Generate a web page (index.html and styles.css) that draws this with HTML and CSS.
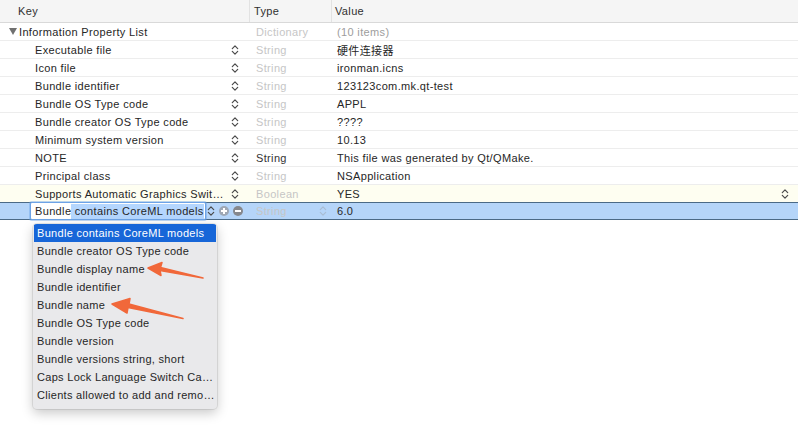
FILE: index.html
```html
<!DOCTYPE html>
<html>
<head>
<meta charset="utf-8">
<link rel="stylesheet" href="styles.css">
</head>
<body>
<svg width="0" height="0" class="defs">
  <defs>
    <g id="chev">
      <path d="M1.3 4.6 L4 1.9 L6.7 4.6" fill="none" stroke="currentColor" stroke-width="1.2" stroke-linecap="round" stroke-linejoin="round"/>
      <path d="M1.3 7.4 L4 10.1 L6.7 7.4" fill="none" stroke="currentColor" stroke-width="1.2" stroke-linecap="round" stroke-linejoin="round"/>
    </g>
  </defs>
</svg>
<div class="plist">
  <div class="header">
    <div class="hcell hkey">Key</div>
    <div class="hcell htype">Type</div>
    <div class="hcell hvalue">Value</div>
  </div>

  <div class="row">
    <div class="kcell root"><span class="disc"></span><span class="kname">Information Property List</span></div>
    <div class="tcell faint">Dictionary</div>
    <div class="vcell muted">(10 items)</div>
  </div>

  <div class="row">
    <div class="kcell"><span class="kname">Executable file</span><svg class="chev" viewBox="0 0 8 12"><use href="#chev"/></svg></div>
    <div class="tcell faint">String</div>
    <div class="vcell">硬件连接器</div>
  </div>

  <div class="row">
    <div class="kcell"><span class="kname">Icon file</span><svg class="chev" viewBox="0 0 8 12"><use href="#chev"/></svg></div>
    <div class="tcell faint">String</div>
    <div class="vcell">ironman.icns</div>
  </div>

  <div class="row">
    <div class="kcell"><span class="kname">Bundle identifier</span><svg class="chev" viewBox="0 0 8 12"><use href="#chev"/></svg></div>
    <div class="tcell faint">String</div>
    <div class="vcell">123123com.mk.qt-test</div>
  </div>

  <div class="row">
    <div class="kcell"><span class="kname">Bundle OS Type code</span><svg class="chev" viewBox="0 0 8 12"><use href="#chev"/></svg></div>
    <div class="tcell faint">String</div>
    <div class="vcell">APPL</div>
  </div>

  <div class="row">
    <div class="kcell"><span class="kname">Bundle creator OS Type code</span><svg class="chev" viewBox="0 0 8 12"><use href="#chev"/></svg></div>
    <div class="tcell faint">String</div>
    <div class="vcell">????</div>
  </div>

  <div class="row">
    <div class="kcell"><span class="kname">Minimum system version</span><svg class="chev" viewBox="0 0 8 12"><use href="#chev"/></svg></div>
    <div class="tcell faint">String</div>
    <div class="vcell">10.13</div>
  </div>

  <div class="row">
    <div class="kcell"><span class="kname">NOTE</span><svg class="chev" viewBox="0 0 8 12"><use href="#chev"/></svg></div>
    <div class="tcell">String</div>
    <div class="vcell">This file was generated by Qt/QMake.</div>
  </div>

  <div class="row">
    <div class="kcell"><span class="kname">Principal class</span><svg class="chev" viewBox="0 0 8 12"><use href="#chev"/></svg></div>
    <div class="tcell faint">String</div>
    <div class="vcell">NSApplication</div>
  </div>

  <div class="row hover">
    <div class="kcell"><span class="kname">Supports Automatic Graphics Switching</span><svg class="chev" viewBox="0 0 8 12"><use href="#chev"/></svg></div>
    <div class="tcell faint">Boolean</div>
    <div class="vcell vpop"><span class="vtext">YES</span><svg class="chev" viewBox="0 0 8 12"><use href="#chev"/></svg></div>
  </div>

  <div class="row selected">
    <div class="kcell editing">
      <div class="field"><span>Bundle</span><span class="sel">&nbsp;contains CoreML models</span></div>
      <svg class="chev" viewBox="0 0 8 12"><use href="#chev"/></svg>
      <span class="btn plus"></span>
      <span class="btn minus"></span>
    </div>
    <div class="tcell faint tpop"><span class="ttext">String</span><svg class="chev light" viewBox="0 0 8 12"><use href="#chev"/></svg></div>
    <div class="vcell">6.0</div>
  </div>
</div>

<div class="popup">
  <div class="item active">Bundle contains CoreML models</div>
  <div class="item">Bundle creator OS Type code</div>
  <div class="item">Bundle display name</div>
  <div class="item">Bundle identifier</div>
  <div class="item">Bundle name</div>
  <div class="item">Bundle OS Type code</div>
  <div class="item">Bundle version</div>
  <div class="item">Bundle versions string, short</div>
  <div class="item">Caps Lock Language Switch Capability</div>
  <div class="item">Clients allowed to add and remove fonts</div>
</div>

<svg class="arrows" width="798" height="438" viewBox="0 0 798 438">
  <path d="M203 278 L160 270.5 L161 275.5 L148 268 L162 262.5 L160.5 267.5 Z" fill="#f1683a" stroke="#f1683a" stroke-width="1.5" stroke-linejoin="round"/>
  <path d="M183 318.5 L128 307.5 L127 313 L112 304 L130 298.5 L129 304 Z" fill="#f1683a" stroke="#f1683a" stroke-width="1.5" stroke-linejoin="round"/>
</svg>
</body>
</html>
```

FILE: styles.css
```css
html, body {
  margin: 0;
  padding: 0;
  background: #ffffff;
}
body {
  width: 798px;
  height: 438px;
  overflow: hidden;
  position: relative;
  font-family: "Liberation Sans", "Noto Sans CJK SC", Arial, sans-serif;
  font-size: 11px;
  letter-spacing: 0.35px;
  color: #262626;
}
.defs {
  position: absolute;
}
.plist {
  display: flex;
  flex-direction: column;
}
.header {
  display: grid;
  grid-template-columns: 249px 82px 1fr;
  height: 22px;
  background: #f5f5f5;
  border-bottom: 1px solid #d9d9d9;
}
.hcell {
  display: flex;
  align-items: center;
  font-size: 11px;
  color: #303030;
}
.hkey {
  padding-left: 18px;
}
.htype {
  padding-left: 4px;
  border-left: 1px solid #e2e2e2;
}
.hvalue {
  padding-left: 3px;
  border-left: 1px solid #e2e2e2;
}
.row {
  display: grid;
  grid-template-columns: 249px 82px 1fr;
  height: 17px;
  border-bottom: 1px solid #ededed;
  background: #ffffff;
}
.row.hover {
  background: #fefef1;
}
.row.selected {
  background: #b5d5f9;
  border-top: 1px solid #4b6a86;
  border-bottom: 1px solid #4b6a86;
  height: 16px;
  margin-top: -1px;
}
.kcell {
  display: flex;
  align-items: center;
  padding-left: 35px;
  padding-right: 10px;
  min-width: 0;
}
.kcell.root {
  padding-left: 9px;
}
.kname {
  flex: 1;
  min-width: 0;
  white-space: nowrap;
  overflow: hidden;
  text-overflow: ellipsis;
  padding-right: 6px;
}
.disc {
  width: 0;
  height: 0;
  border-left: 4px solid transparent;
  border-right: 4px solid transparent;
  border-top: 7px solid #707070;
  margin-right: 2px;
}
.chev {
  width: 8px;
  height: 12px;
  flex: none;
  color: #4a4a4a;
}
.chev.light {
  color: #a9bdd4;
}
.tcell {
  display: flex;
  align-items: center;
  padding-left: 7px;
  color: #333333;
}
.tcell.faint {
  color: #c6c6c6;
}
.tpop {
  padding-right: 4px;
}
.ttext {
  flex: 1;
}
.vcell {
  display: flex;
  align-items: center;
  padding-left: 6px;
  white-space: nowrap;
}
.vcell.muted {
  color: #9d9d9d;
}
.vpop {
  padding-right: 9px;
}
.vtext {
  flex: 1;
}
.kcell.editing {
  padding-left: 31px;
  padding-right: 0;
}
.field {
  width: 170px;
  height: 16px;
  flex: none;
  background: #ffffff;
  box-shadow: 0 0 0 1px #6da3e6, 0 0 0 2px rgba(109, 163, 230, 0.45);
  border-radius: 1px;
  display: flex;
  align-items: center;
  padding-left: 4px;
  white-space: nowrap;
  overflow: hidden;
  margin-right: 2px;
}
.field span {
  flex: none;
  line-height: 15px;
}
.field .sel {
  background: #b4d6fe;
}
.btn {
  width: 10px;
  height: 10px;
  border-radius: 50%;
  flex: none;
  position: relative;
}
.plus {
  background: #9ea7b4;
  margin-left: 4px;
}
.minus {
  background: #86888d;
  margin-left: 4px;
}
.plus::before, .minus::before {
  content: "";
  position: absolute;
  left: 2px;
  top: 4px;
  width: 6px;
  height: 2px;
  background: #ffffff;
}
.plus::after {
  content: "";
  position: absolute;
  left: 4px;
  top: 2px;
  width: 2px;
  height: 6px;
  background: #ffffff;
}
.popup {
  position: absolute;
  left: 33px;
  top: 224px;
  width: 184px;
  padding-bottom: 5px;
  background: #e9e9eb;
  border-radius: 4px;
  box-shadow: 0 0 0 1px rgba(0, 0, 0, 0.08), 0 4px 12px rgba(0, 0, 0, 0.22);
  display: flex;
  flex-direction: column;
  overflow: hidden;
}
.item {
  height: 18px;
  line-height: 18px;
  padding-left: 4px;
  padding-right: 1px;
  white-space: nowrap;
  overflow: hidden;
  text-overflow: ellipsis;
  letter-spacing: 0.3px;
  color: #262626;
}
.item.active {
  background: #1766d8;
  color: #ffffff;
  margin-left: 1px;
  margin-right: 1px;
  padding-left: 3px;
}
.arrows {
  position: absolute;
  left: 0;
  top: 0;
  pointer-events: none;
}
```
